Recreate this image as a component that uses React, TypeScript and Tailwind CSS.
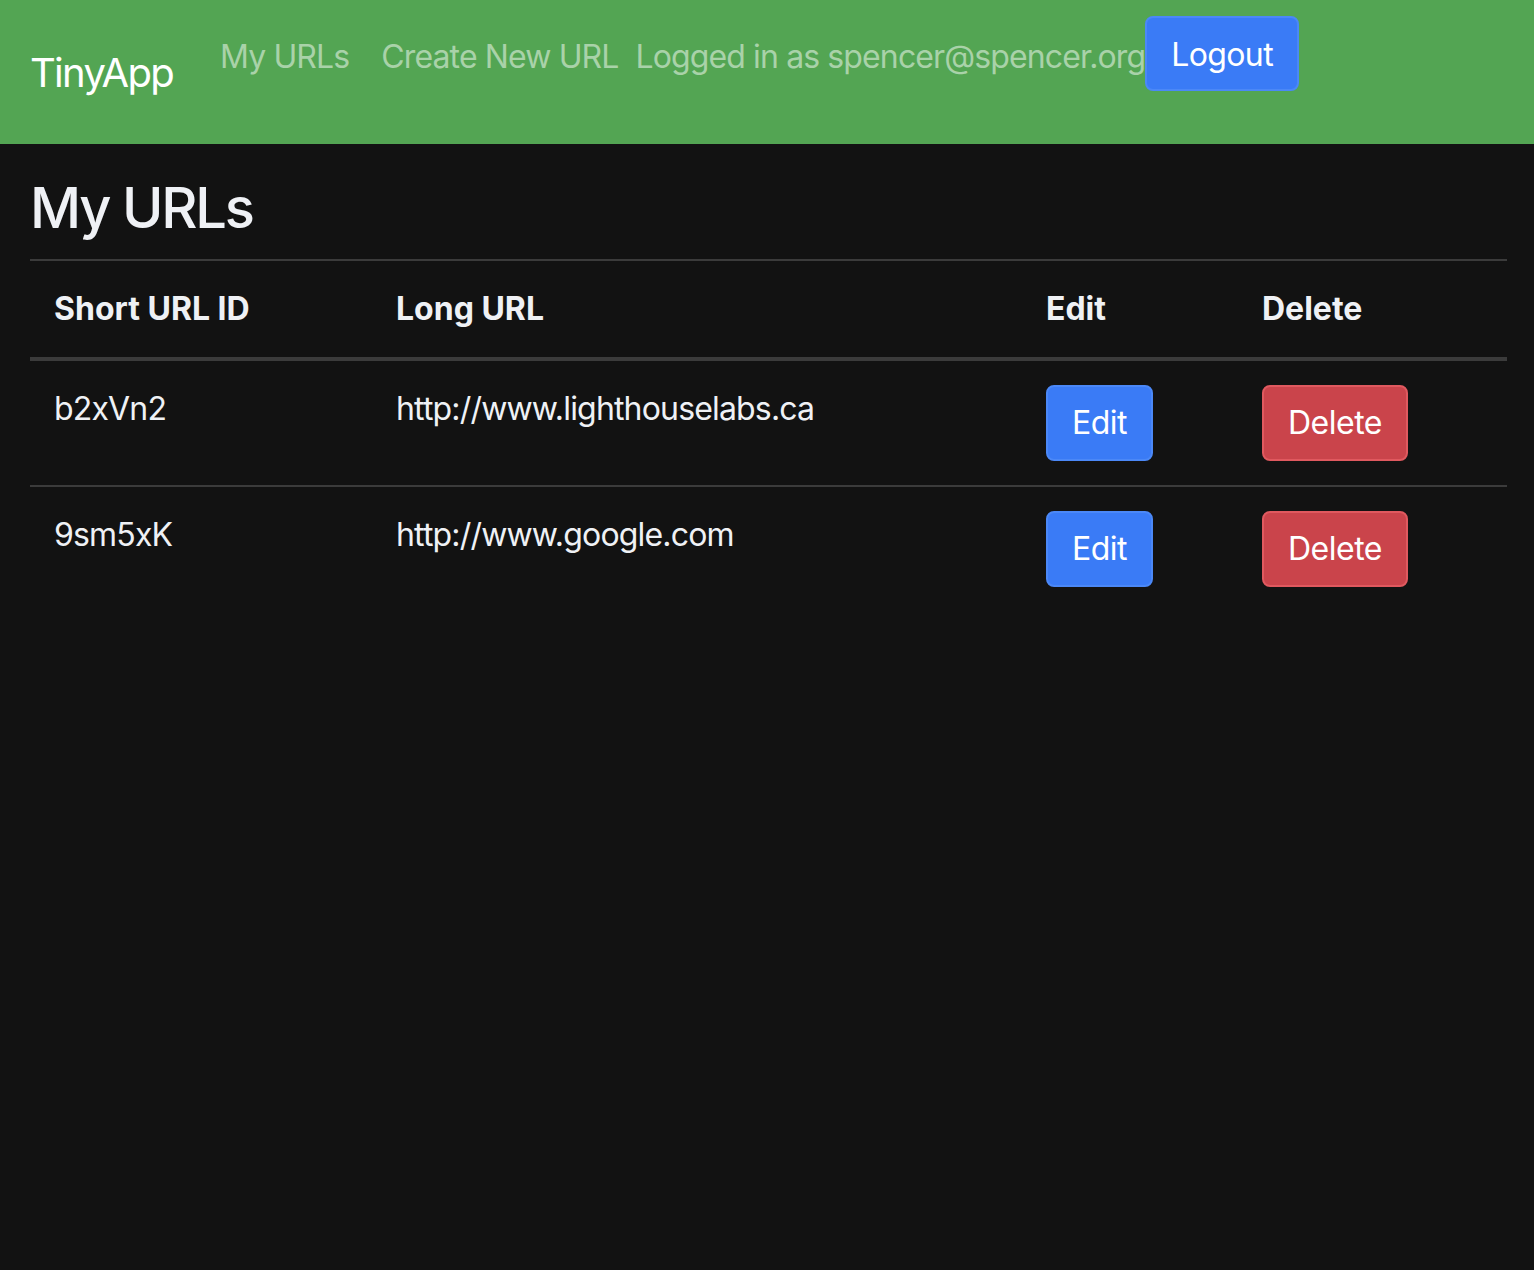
import React from 'react';

const urls = [
  { id: 'b2xVn2', longURL: 'http://www.lighthouselabs.ca' },
  { id: '9sm5xK', longURL: 'http://www.google.com' },
];

const App: React.FC = () => {
  return (
    <div className="min-h-[1270px] bg-[#121212] text-[#eff1f5] font-['Inter','Liberation_Sans',sans-serif]">
      {/* Navbar */}
      <nav className="h-[144px] bg-[#53a553] px-[30px] flex items-start">
        <a className="mt-[43px] text-[40px] leading-[60px] text-white tracking-[-1.7px]">TinyApp</a>
        <div className="mt-4 ml-[47px] h-[75px] flex items-center text-[32px] leading-[48px] text-[#a9d2a9] tracking-[-0.88px]">
          <a className="mt-[6px]">My URLs</a>
          <a className="mt-[6px] ml-[32px]">Create New URL</a>
          <span className="mt-[6px] ml-[17px]">Logged in as spencer@spencer.org</span>
          <button className="h-[75px] px-[24px] pt-[3px] rounded-lg border-2 border-[#4b88f7] bg-[#3a7bf6] text-white text-[32px] tracking-[-0.6px]">
            Logout
          </button>
        </div>
      </nav>

      <main className="px-[30px]">
        <h1 className="pt-[30px] pb-[17px] text-[56px] leading-[68px] font-medium tracking-[-2.2px]">My URLs</h1>

        {/* Table */}
        <div className="w-[1477px] border-t-2 border-[#3b3b3b] text-[32px] leading-[48px] tracking-[-0.83px]">
          <div className="grid grid-cols-[342px_650px_216px_1fr] border-b-4 border-[#3b3b3b] font-bold tracking-normal">
            <div className="p-6">Short URL ID</div>
            <div className="p-6">Long URL</div>
            <div className="p-6">Edit</div>
            <div className="p-6">Delete</div>
          </div>
          {urls.map((u, i) => (
            <div
              key={u.id}
              className={`grid grid-cols-[342px_650px_216px_1fr] ${i < urls.length - 1 ? 'border-b-2 border-[#3b3b3b]' : ''}`}
            >
              <div className="p-6">{u.id}</div>
              <div className="p-6">{u.longURL}</div>
              <div className="p-6">
                <button className="h-[76px] px-[24px] rounded-lg border-2 border-[#4b88f7] bg-[#3a7bf6] text-white tracking-[-0.5px]">Edit</button>
              </div>
              <div className="p-6">
                <button className="h-[76px] px-[24px] rounded-lg border-2 border-[#e0595f] bg-[#ca444b] text-white tracking-[-0.5px]">Delete</button>
              </div>
            </div>
          ))}
        </div>
      </main>
    </div>
  );
};

export default App;
